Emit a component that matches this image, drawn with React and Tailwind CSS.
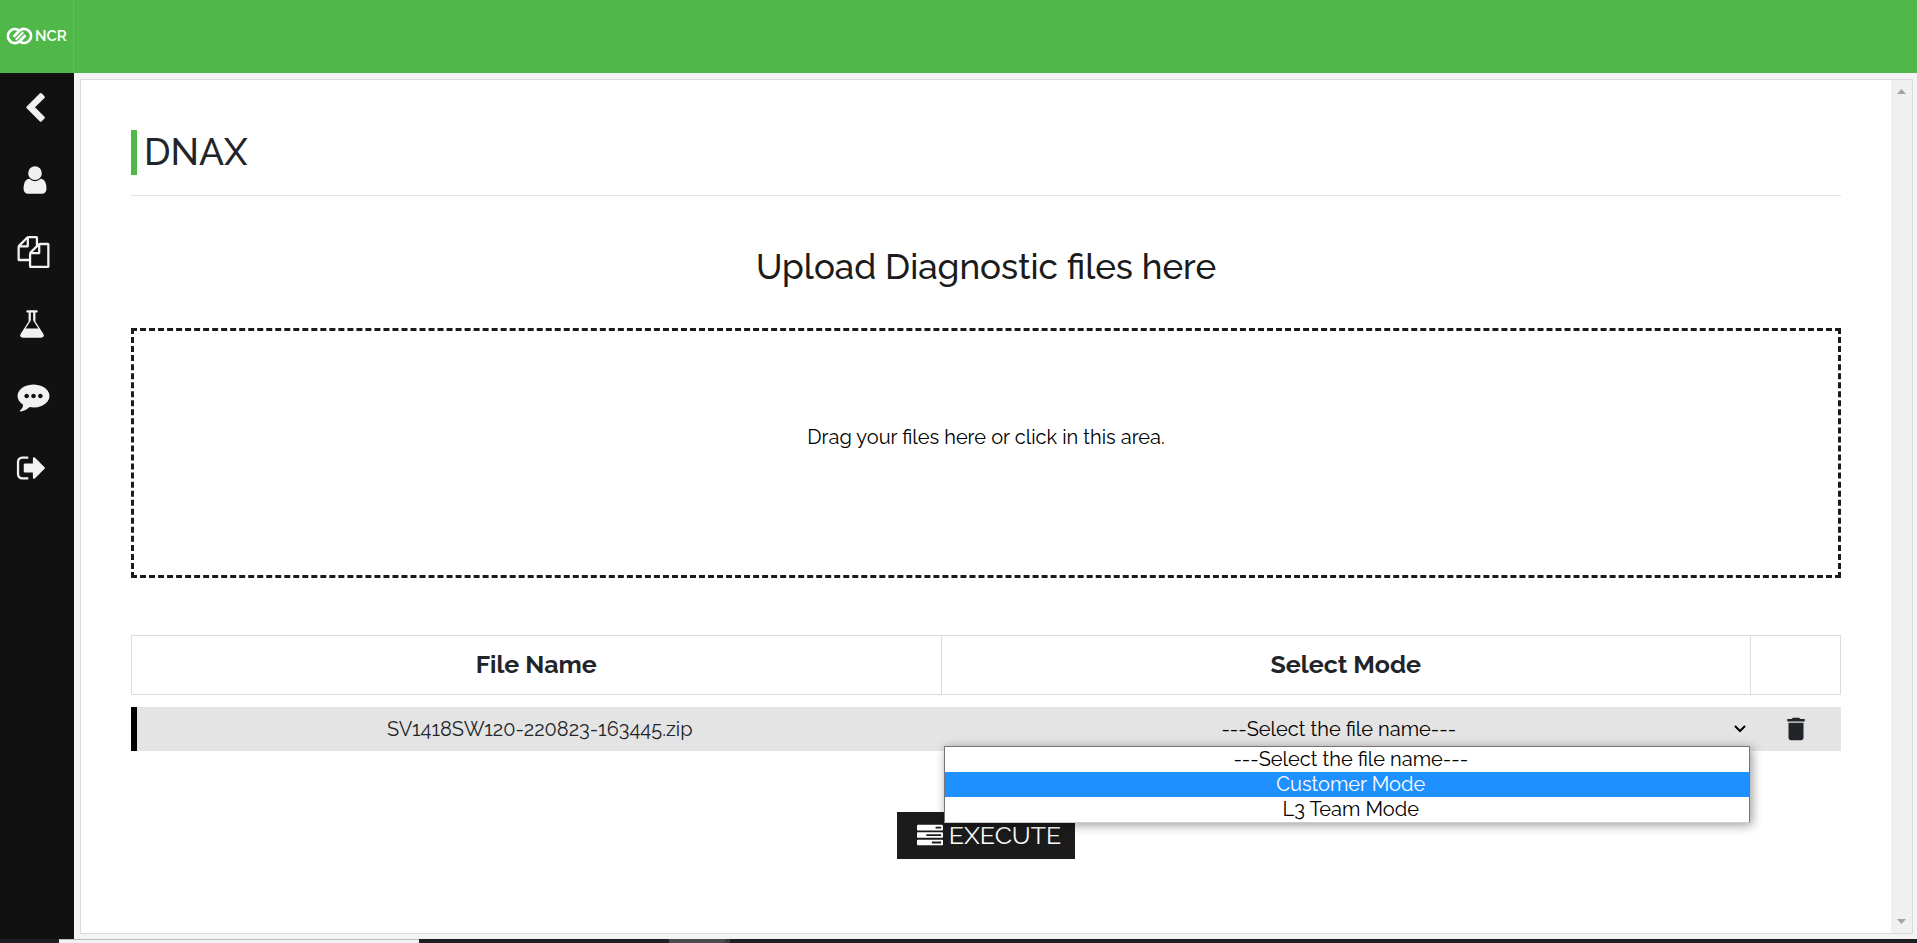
import { MdDelete } from 'react-icons/md';

const NAV = [
  { label: 'Collapse menu', viewBox: '-112 -28 1792 1792', d: 'M1427 301l-531 531 531 531q19 19 19 45t-19 45l-166 166q-19 19-45 19t-45-19l-742-742q-19-19-19-45t19-45l742-742q19-19 45-19t45 19l166 166q19 19 19 45t-19 45z' },
  { label: 'Profile', viewBox: '-112 0 1792 1792', d: 'M1536 1399q0 109-62.5 187t-150.5 78h-854q-88 0-150.5-78t-62.5-187q0-85 8.5-160.5t31.5-152 58.5-131 94-89 134.5-34.5q131 128 313 128t313-128q76 0 134.5 34.5t94 89 58.5 131 31.5 152 8.5 160.5zm-256-887q0 159-112.5 271.5t-271.5 112.5-271.5-112.5-112.5-271.5 112.5-271.5 271.5-112.5 271.5 112.5 112.5 271.5z' },
  { label: 'Files', viewBox: '-28 0 1792 1792', d: 'M1696 384q40 0 68 28t28 68v1216q0 40-28 68t-68 28h-960q-40 0-68-28t-28-68v-288h-544q-40 0-68-28t-28-68v-672q0-40 20-88t48-76l408-408q28-28 76-48t88-20h416q40 0 68 28t28 68v328q68-40 128-40h416zm-544 213l-299 299h299v-299zm-640-384l-299 299h299v-299zm196 647l316-316v-416h-384v416q0 40-28 68t-68 28h-416v640h512v-256q0-40 20-88t48-76zm956 804v-1152h-384v416q0 40-28 68t-68 28h-416v640h896z' },
  { label: 'Diagnostics', viewBox: '56 0 1792 1792', d: 'M1527 1447q56 89 21.5 153t-140.5 64h-1024q-106 0-140.5-64t21.5-153l439-693v-498h-64q-26 0-45-19t-19-45 19-45 45-19h512q26 0 45 19t19 45-19 45-45 19h-64v498zm-715-725l-272 430h712l-272-430-20-31v-436h-128v436z' },
  { label: 'Feedback', viewBox: '-28 0 1792 1792', d: 'M640 896q0-53-37.5-90.5t-90.5-37.5-90.5 37.5-37.5 90.5 37.5 90.5 90.5 37.5 90.5-37.5 37.5-90.5zm384 0q0-53-37.5-90.5t-90.5-37.5-90.5 37.5-37.5 90.5 37.5 90.5 90.5 37.5 90.5-37.5 37.5-90.5zm384 0q0-53-37.5-90.5t-90.5-37.5-90.5 37.5-37.5 90.5 37.5 90.5 90.5 37.5 90.5-37.5 37.5-90.5zm384 0q0 174-120 321.5t-326 233-450 85.5q-110 0-211-18-173 173-435 229-52 10-86 13-12 1-22-6t-13-18q-4-15 20-37 5-5 23.5-21.5t25.5-23.5 23.5-25.5 24-31.5 20.5-37 20-48 14.5-57.5 12.5-72.5q-146-90-229.5-216.5t-83.5-269.5q0-174 120-321.5t326-233 450-85.5 450 85.5 326 233 120 321.5z' },
  { label: 'Sign out', viewBox: '70 0 1792 1792', d: 'M704 1440q0 4 1 20t.5 26.5-3 23.5-10 19.5-20.5 6.5h-320q-119 0-203.5-84.5t-84.5-203.5v-704q0-119 84.5-203.5t203.5-84.5h320q13 0 22.5 9.5t9.5 22.5q0 4 1 20t.5 26.5-3 23.5-10 19.5-20.5 6.5h-320q-66 0-113 47t-47 113v704q0 66 47 113t113 47h312l11.5 1 11.5 3 8 5.5 7 9 2 13.5zm928-544q0 26-19 45l-544 544q-19 19-45 19t-45-19-19-45v-288h-448q-26 0-45-19t-19-45v-384q0-26 19-45t45-19h448v-288q0-26 19-45t45-19 45 19l544 544q19 19 19 45z' },
];

const TASKS =
  'M1024 1408h640v-128h-640v128zm-384-512h1024v-128h-1024v128zm640-512h384v-128h-384v128zm512 832v256q0 26-19 45t-45 19h-1664q-26 0-45-19t-19-45v-256q0-26 19-45t45-19h1664q26 0 45 19t19 45zm0-512v256q0 26-19 45t-45 19h-1664q-26 0-45-19t-19-45v-256q0-26 19-45t45-19h1664q26 0 45 19t19 45zm0-512v256q0 26-19 45t-45 19h-1664q-26 0-45-19t-19-45v-256q0-26 19-45t45-19h1664q26 0 45 19t19 45z';

const MODES = ['---Select the file name---', 'Customer Mode', 'L3 Team Mode'];

function Logo() {
  return (
    <a href="#home" className="flex h-[71px] w-[74px] items-center gap-[2px] pl-[6px] text-white">
      <svg width="27" height="18" viewBox="0 0 27 18" fill="none" stroke="currentColor" aria-hidden="true">
        <path d="M13 3.300A7 7 0 1 0 12.800 14.900L19.500 8.200" strokeWidth="2.800" strokeLinejoin="round" />
        <path d="M14 14.700A7 7 0 1 0 14.200 3.100L7.500 9.800" strokeWidth="2.800" strokeLinejoin="round" />
        <path d="M9.800 12.700L17.200 5.300" strokeWidth="2" />
      </svg>
      <span className="text-[15px] font-semibold leading-5">NCR</span>
    </a>
  );
}

function Sidebar() {
  return (
    <nav className="flex w-[74px] shrink-0 flex-col gap-10 bg-[#111] pt-[19px] pl-[17px]">
      {NAV.map((item) => (
        <button key={item.label} type="button" aria-label={item.label} className="size-8 text-[#f1f1f1]">
          <svg className="size-8" viewBox={item.viewBox} fill="currentColor" overflow="visible">
            <path d={item.d} />
          </svg>
        </button>
      ))}
    </nav>
  );
}

function ModeSelect() {
  return (
    <div className="relative h-11">
      <select
        aria-label="Select mode"
        className="h-full w-full appearance-none pr-[14px] text-center text-xl text-black outline-none [text-align-last:center]"
      >
        {MODES.map((m) => (
          <option key={m}>{m}</option>
        ))}
      </select>
      <svg className="pointer-events-none absolute top-[17px] right-[5px] h-[10px] w-3" viewBox="0 0 12 10" fill="none" stroke="#000" strokeWidth="2">
        <path d="M1 2l5 5 5-5" />
      </svg>
      <ul className="absolute top-[39px] right-px left-[3px] z-10 border border-b-[#ccc] border-t-[#767676] border-x-[#767676] bg-white text-center text-xl leading-[25px] text-black shadow-[2px_2px_10px_rgba(0,0,0,0.4)]">
        {MODES.map((m, i) => (
          <li key={m} className={i === 1 ? 'bg-[#1e90ff] pl-2 text-white' : 'pl-2'}>
            {m}
          </li>
        ))}
      </ul>
    </div>
  );
}

function FileTable() {
  return (
    <table className="mt-[57px] w-full table-fixed border-collapse text-[#212529]">
      <colgroup>
        <col />
        <col />
        <col className="w-[90px]" />
      </colgroup>
      <thead>
        <tr className="h-[59px] text-[25px]">
          <th className="border border-[#dcdcdc] font-bold">File Name</th>
          <th className="border border-[#dcdcdc] font-bold">Select Mode</th>
          <th className="border border-[#dcdcdc]" aria-label="Actions" />
        </tr>
      </thead>
      <tbody>
        <tr className="h-3">
          <td colSpan={3} />
        </tr>
        <tr className="h-11 bg-[#e4e4e4]">
          <td className="p-0">
            <div className="-ml-px flex h-11 items-center justify-center border-l-[6px] border-black pl-[2px] text-xl">
              SV1418SW120-220823-163445.zip
            </div>
          </td>
          <td className="p-0">
            <ModeSelect />
          </td>
          <td className="p-0 text-center">
            <button type="button" aria-label="Delete file" className="align-middle">
              <MdDelete className="size-[30px]" />
            </button>
          </td>
        </tr>
      </tbody>
    </table>
  );
}

function Panel() {
  return (
    <section className="flex min-w-0 flex-1 border border-[#dbdbdf] bg-white">
      <div className="min-w-0 flex-1 px-[50px] pt-[50px]">
        <div className="border-b border-[#e3e3e3] pb-5">
          <h1 className="border-l-[6px] border-[#50b848] pl-[7px] text-[37px] font-medium leading-[45px] text-[#212529]">DNAX</h1>
        </div>
        <h2 className="mt-12 text-center text-[35px] font-medium leading-[45px] text-[#1b1b1b]">Upload Diagnostic files here</h2>
        <label className="mt-[39px] flex h-[250px] cursor-pointer justify-center border-3 border-dashed border-[#1b1b1b] pt-[91px] text-xl leading-[30px] text-black">
          Drag your files here or click in this area.
          <input type="file" multiple className="sr-only" />
        </label>
        <FileTable />
        <div className="mt-[61px] flex justify-center">
          <button type="button" className="flex h-[47px] items-center gap-[6px] bg-[#1b1b1b] pt-[2px] pr-[14px] pl-5 text-[25px] text-white">
            <svg className="size-[26px]" viewBox="0 0 1792 1792" fill="currentColor" aria-hidden="true">
              <path d={TASKS} />
            </svg>
            EXECUTE
          </button>
        </div>
      </div>
      <div className="flex w-[21px] shrink-0 flex-col items-center justify-between bg-[#f0f0f0] py-[9px] text-[#a3a3a3]" aria-hidden="true">
        <svg width="9" height="5" viewBox="0 0 9 5" fill="currentColor"><path d="M0 5L4.500 0 9 5z" /></svg>
        <svg width="9" height="5" viewBox="0 0 9 5" fill="currentColor"><path d="M0 0L4.500 5 9 0z" /></svg>
      </div>
    </section>
  );
}

export default function App() {
  return (
    <div className="flex h-screen flex-col overflow-hidden font-['Raleway','Lato',sans-serif]">
      <header className="flex h-[73px] shrink-0 bg-[#50b848]">
        <div className="w-[74px] border-r border-[#62bf5b]">
          <Logo />
        </div>
      </header>
      <div className="flex min-h-0 flex-1">
        <Sidebar />
        <main className="flex min-w-0 flex-1 bg-[#f4f4f4] pt-[6px] pr-1 pb-[5px] pl-[6px]">
          <Panel />
        </main>
      </div>
      <footer className="flex h-1 shrink-0 bg-[#1e1f22]">
        <div className="ml-[59px] w-[360px] border-t border-[#bbb] bg-[#f2f2f2]" />
        <div className="ml-[250px] w-[56px] bg-[#4b4b4b]" />
        <div className="w-[5px] bg-[#3a3a3a]" />
      </footer>
    </div>
  );
}
